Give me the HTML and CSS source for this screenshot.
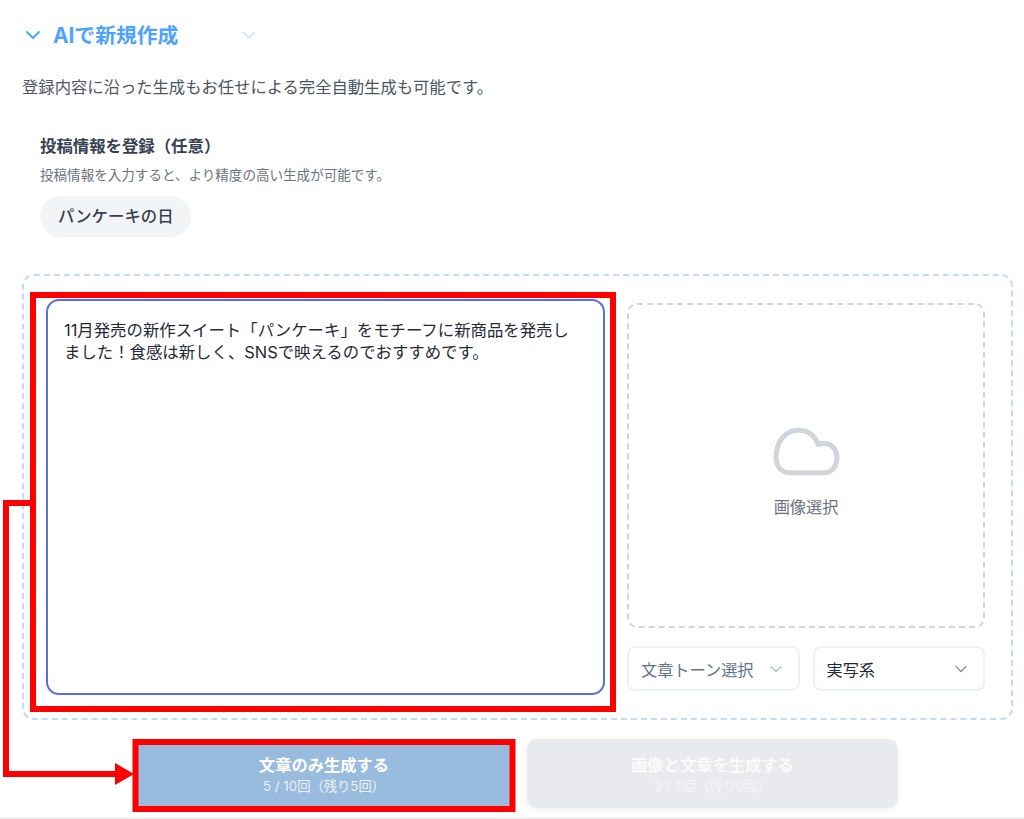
FILE: index.html
```html
<!DOCTYPE html>
<html lang="ja">
<head>
<meta charset="utf-8">
<title>AIで新規作成</title>
<link rel="stylesheet" href="styles.css">
</head>
<body>
<main class="page">
  <header class="head">
    <svg class="chev-main" viewBox="0 0 16 10" width="16" height="10"><path d="M2 2l6 6 6-6" fill="none" stroke="#4da3ff" stroke-width="2" stroke-linecap="round" stroke-linejoin="round"/></svg>
    <h1 class="title">AIで新規作成</h1>
    <svg class="chev-faint" viewBox="0 0 14 8" width="14" height="8"><path d="M1.5 1.5L7 6.5l5.5-5" fill="none" stroke="#c4e0fc" stroke-width="1.6" stroke-linecap="round" stroke-linejoin="round"/></svg>
  </header>
  <p class="desc">登録内容に沿った生成もお任せによる完全自動生成も可能です。</p>
  <section class="info">
    <h2 class="info-title">投稿情報を登録（任意）</h2>
    <p class="info-sub">投稿情報を入力すると、より精度の高い生成が可能です。</p>
    <span class="pill">パンケーキの日</span>
  </section>
  <section class="panel">
    <div class="editor">11月発売の新作スイート「パンケーキ」をモチーフに新商品を発売しました！食感は新しく、SNSで映えるのでおすすめです。</div>
    <div class="side">
      <div class="drop">
        <svg class="cloud" viewBox="0 0 68 50" width="69" height="51"><path d="M17 46C9 46 4 39 4 31 4 14 14 4 26 4c9 0 16 5 19.500 14 2-.7 4-1 5.500-1 8 0 13 6 13 14 0 9-5 15-13 15z" fill="none" stroke="#d1d5db" stroke-width="5" stroke-linejoin="round"/></svg>
        <span class="drop-label">画像選択</span>
      </div>
      <div class="selects">
        <div class="select muted">文章トーン選択<svg class="sel-chev" viewBox="0 0 12 8" width="12" height="8"><path d="M1 1.500l5 5 5-5" fill="none" stroke="#b6bcc6" stroke-width="1.400" stroke-linecap="round" stroke-linejoin="round"/></svg></div>
        <div class="select">実写系<svg class="sel-chev" viewBox="0 0 12 8" width="12" height="8"><path d="M1 1.500l5 5 5-5" fill="none" stroke="#8a909a" stroke-width="1.400" stroke-linecap="round" stroke-linejoin="round"/></svg></div>
      </div>
    </div>
  </section>
  <div class="actions">
    <button class="btn primary"><b>文章のみ生成する</b><small>5 / 10回（残り5回）</small></button>
    <button class="btn disabled"><b>画像と文章を生成する</b><small>2 / 2回（残り0回）</small></button>
  </div>
</main>
<svg class="marks" viewBox="0 0 1024 819" width="1024" height="819" aria-hidden="true">
  <rect x="33" y="295" width="580" height="414" fill="none" stroke="#f00" stroke-width="6"/>
  <rect x="135.500" y="742" width="377" height="67" fill="none" stroke="#f00" stroke-width="6"/>
  <path d="M31 503H6V774H116" fill="none" stroke="#f00" stroke-width="6"/>
  <path d="M115 763l19 11-19 11z" fill="#f00"/>
</svg>
</body>
</html>
```
FILE: styles.css
```css
* { box-sizing: border-box; }
html, body { margin: 0; padding: 0; }
body {
  width: 1024px;
  height: 819px;
  overflow: hidden;
  background: #fff;
  position: relative;
  font-family: Inter, "Noto Sans CJK JP", "Noto Sans", sans-serif;
  color: #1f2937;
}
.page {
  height: 819px;
  padding: 22px 10px 0 22px;
  border-bottom: 2px solid #f0f1f3;
}
.head {
  display: flex;
  align-items: center;
  height: 28px;
}
.chev-main { margin: 0 0 2px 3px; }
.chev-faint { margin-bottom: 2px; }
.title {
  margin: 0 0 0 12px;
  width: 189px;
  font-size: 20.800px;
  font-weight: 700;
  line-height: 28px;
  color: #4da3ff;
}
.desc {
  margin: 25px 0 0;
  font-size: 16.320px;
  line-height: 24px;
  color: #4b5563;
}
.info {
  margin: 35px 0 0 18px;
  display: flex;
  flex-direction: column;
  align-items: flex-start;
}
.info-title {
  margin: 0;
  font-size: 16.400px;
  font-weight: 700;
  line-height: 24px;
  color: #374151;
}
.info-sub {
  margin: 8px 0 0;
  font-size: 13.560px;
  line-height: 18px;
  color: #6b7280;
}
.pill {
  margin-top: 12px;
  width: 151px;
  height: 41px;
  padding-left: 18px;
  border-radius: 21px;
  background: #f3f4f6;
  font-size: 16.400px;
  line-height: 41px;
  font-weight: 500;
  color: #374151;
}
.panel {
  margin: 37px 0 0 0;
  width: 991px;
  height: 446px;
  padding: 23px 26px 23px 22px;
  display: flex;
  gap: 22px;
  border: 2px dashed #bfdbfe;
  border-radius: 12px;
}
.editor {
  width: 559px;
  height: 396px;
  flex: none;
  padding: 18px 18px 17px 16px;
  border: 2px solid #5a6fd8;
  border-radius: 13px;
  font-size: 16.400px;
  line-height: 22px;
  color: #1f2937;
}
.side {
  flex: 1;
  display: flex;
  flex-direction: column;
  gap: 18px;
  padding-top: 4px;
}
.drop {
  height: 325px;
  display: flex;
  flex-direction: column;
  align-items: center;
  border: 2px dashed #d1d5db;
  border-radius: 10px;
  padding-top: 121px;
}
.cloud { flex: none; }
.drop-label {
  margin-top: 18px;
  font-size: 16.200px;
  line-height: 24px;
  color: #6b7280;
}
.selects {
  display: flex;
  gap: 13px;
}
.select {
  flex: 1;
  height: 45px;
  padding: 0 16px 0 12px;
  display: flex;
  align-items: center;
  justify-content: space-between;
  border: 2px solid #eef1f6;
  border-radius: 8px;
  font-size: 16.200px;
  color: #1f2937;
}
.select.muted { color: #64748b; }
.actions {
  margin: 19px 0 0 116px;
  display: flex;
  gap: 17px;
}
.btn {
  width: 372px;
  height: 69px;
  border: 0;
  border-radius: 10px;
  padding: 0;
  display: flex;
  flex-direction: column;
  align-items: center;
  justify-content: center;
  font-family: inherit;
  color: #fff;
}
.btn b {
  font-size: 16.300px;
  font-weight: 700;
  line-height: 24px;
}
.btn small {
  font-size: 13.300px;
  line-height: 18px;
  opacity: .8;
}
.primary { background: #99bbde; border-radius: 0; }
.disabled {
  width: 371px;
  background: #e8eaed;
  box-shadow: 0 2px 5px rgba(0, 0, 0, .06);
}
.disabled b { opacity: .8; }
.disabled small { opacity: .55; }
.marks {
  position: absolute;
  left: 0;
  top: 0;
  pointer-events: none;
}
```
